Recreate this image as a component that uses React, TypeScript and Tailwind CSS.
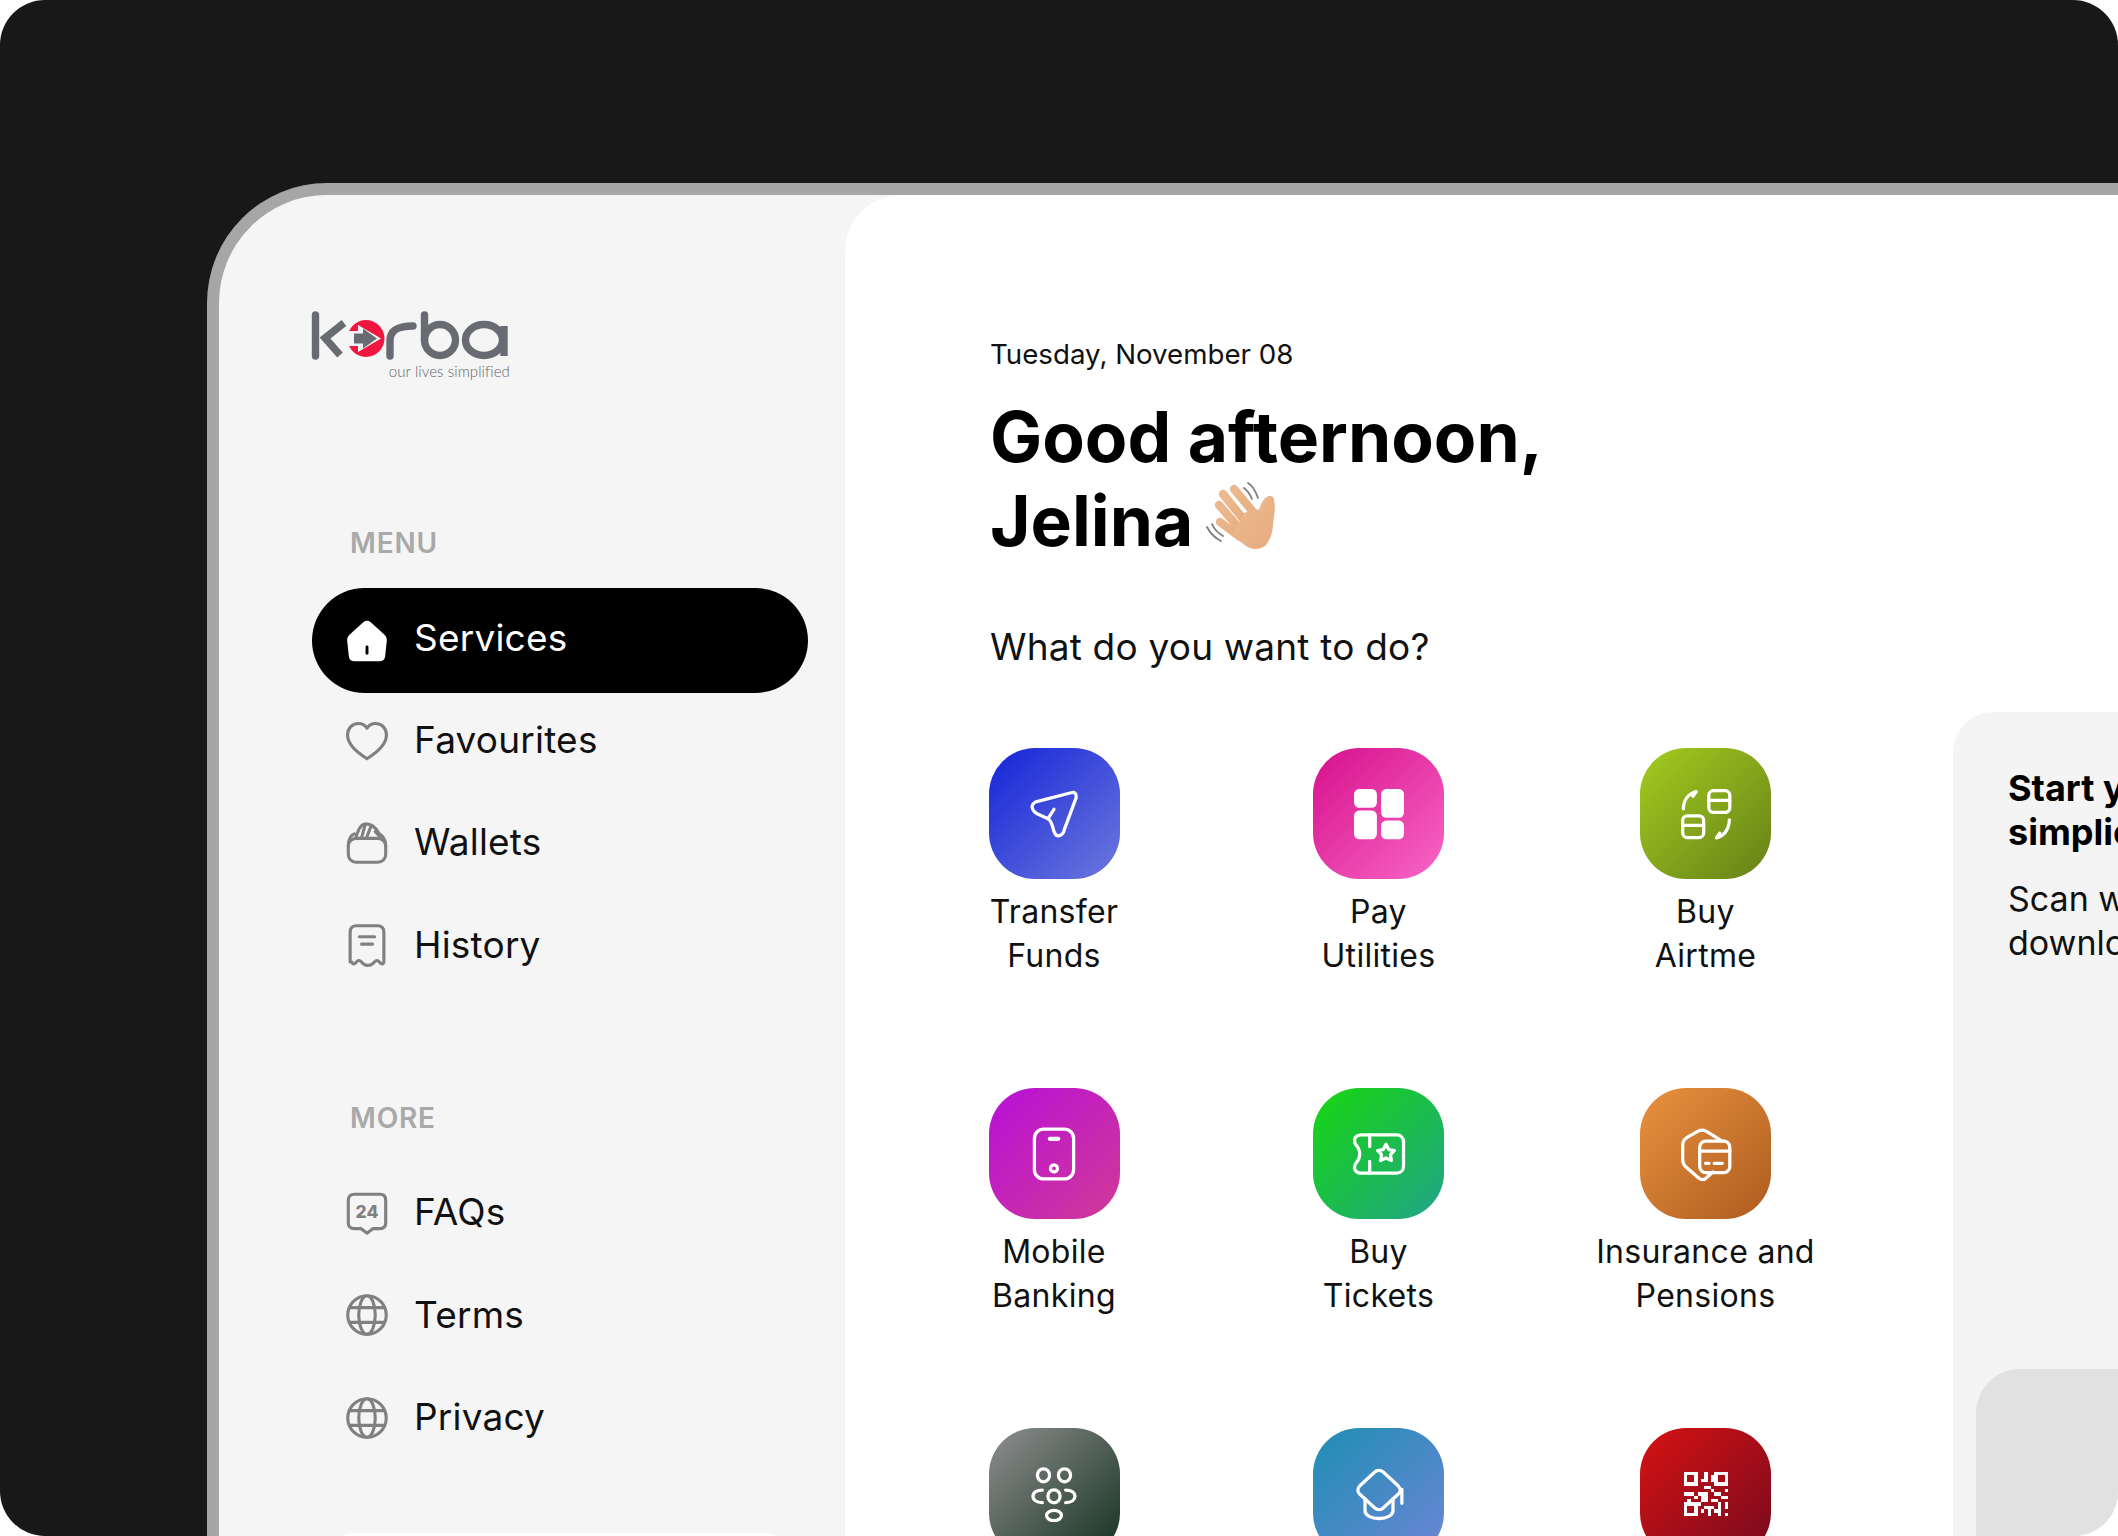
const Stroke = ({ children, size = 44, width = 1.7 }: { children: React.ReactNode; size?: number; width?: number }) => (
  <svg
    width={size}
    height={size}
    viewBox="0 0 24 24"
    fill="none"
    stroke="currentColor"
    strokeWidth={width}
    strokeLinecap="round"
    strokeLinejoin="round"
    className="shrink-0"
  >
    {children}
  </svg>
);

const HomeIcon = () => (
  <svg width={44} height={44} viewBox="0 0 24 24" className="shrink-0">
    <path
      d="M9.800 1.900c1.300-1.200 3.100-1.200 4.400 0l7.200 6.600c1 .9 1.500 2 1.400 3.300l-.9 8.500c-.2 1.800-1.300 2.700-3 2.700H5.100c-1.700 0-2.800-.9-3-2.700l-.9-8.500c-.1-1.300.4-2.400 1.400-3.300z"
      fill="#fff"
    />
    <rect x="11.200" y="14.500" width="1.600" height="5" rx=".8" fill="#000" />
  </svg>
);

const HeartIcon = () => (
  <Stroke>
    <path d="M12 22.200C9 20.300 1.400 15.800 1.400 9.300 1.400 5.400 4.100 3 7.200 3c2 0 3.800 1 4.800 2.600C13 4 14.800 3 16.800 3c3.100 0 5.800 2.400 5.800 6.300 0 6.500-7.600 11-10.600 12.900z" />
  </Stroke>
);

const WalletIcon = () => (
  <Stroke>
    <rect x="1.800" y="9.500" width="20.400" height="13" rx="4.200" />
    <path d="M1.800 13.500c0-3.500 1-5.500 3.200-6.500M22.200 13.500c0-3.500-1.800-5.500-3.700-6.800C16.500 3 13.500 1.500 11 1.600 8.500 1.700 7 5 5.800 9.500M11 1.800 9 9.300M14 3.300l-2.300 6M16.500 5.800l3.500 3.700" />
  </Stroke>
);

const ReceiptIcon = () => (
  <Stroke>
    <path d="M2.800 21.300V5c0-2.300 1.200-3.500 3.500-3.500h11.400c2.300 0 3.500 1.200 3.500 3.500v16.300c0 1-1 1.300-1.700.7l-1-1c-.7-.7-1.600-.7-2.200 0l-1 1c-1.500 1.500-4.100 1.500-5.600 0l-1-1c-.6-.7-1.500-.7-2.200 0l-1 1c-.7.6-1.700.3-1.700-.7z" />
    <path d="M7.800 7.500h8.400M9 11.500h6" />
  </Stroke>
);

const FaqIcon = () => (
  <Stroke>
    <path d="M5 1.800h14c2 0 3.200 1.200 3.200 3.200v12.400c0 2-1.200 3.100-3.200 3.100h-3.700L12 23l-3.300-2.500H5c-2 0-3.200-1.100-3.200-3.100V5c0-2 1.200-3.200 3.200-3.200z" />
    <text x="12" y="14.800" textAnchor="middle" fontSize="9.500" fontWeight="800" fontFamily="Inter, sans-serif" fill="currentColor" stroke="none">
      24
    </text>
  </Stroke>
);

const GlobeIcon = () => (
  <Stroke>
    <circle cx="12" cy="12" r="10.500" />
    <ellipse cx="12" cy="12" rx="4.500" ry="10.500" />
    <path d="M2.800 8h18.400M2.800 16h18.400" />
  </Stroke>
);

const SendIcon = () => (
  <Stroke size={56} width={1.4}>
    <path d="M19.300 2.900c1.500-.5 2.500.4 2.200 2.100L16.500 18.500c-.6 3-3.300 3.800-4.300 1.500-1-2.400-.8-4.700-2.800-6L5 12C2.300 10.500 1.800 8 4.200 6.800z" />
    <path d="M9.400 14l2.600-4" />
  </Stroke>
);

const UtilitiesIcon = () => (
  <svg width={56} height={56} viewBox="0 0 24 24" fill="#fff" className="shrink-0">
    <rect x="1.300" y="1.300" width="9.800" height="8" rx="2.200" />
    <rect x="1.300" y="10.500" width="9.800" height="12.300" rx="2.200" />
    <rect x="12.900" y="1.300" width="9.800" height="12.300" rx="2.200" />
    <rect x="12.900" y="14.800" width="9.800" height="8" rx="2.200" />
  </svg>
);

const AirtimeIcon = () => (
  <Stroke size={56} width={1.4}>
    <rect x="13.200" y="2" width="9" height="9.300" rx="2" />
    <path d="M13.200 6.200h9" />
    <rect x="2" y="12.800" width="9" height="9.300" rx="2" />
    <path d="M2 16.900h9" />
    <path d="M2.300 9.800C2.300 6 4.500 3.300 7.800 2.400l-1.400 2" />
    <path d="M22 14.500c0 3.800-2.200 6.900-5.500 7.700l1.400-2" />
  </Stroke>
);

const MobileIcon = () => (
  <Stroke size={56} width={1.4}>
    <rect x="3.600" y="1.300" width="16.800" height="21.400" rx="4" />
    <path d="M10.200 5.500h3.600" strokeWidth={1.800} />
    <circle cx="12" cy="18.200" r="1.500" />
  </Stroke>
);

const TicketIcon = () => (
  <Stroke size={56} width={1.4}>
    <path d="M4.500 3.800h15c1.800 0 3 1.200 3 3v10.400c0 1.800-1.200 3-3 3h-15c-1.600 0-2.800-.8-3-2.200 0-.5 0-1.500.6-2.100.8-.8 1.600-2 1.600-3.900s-.8-3.100-1.600-3.900c-.6-.6-.6-1.600-.6-2.100.2-1.400 1.400-2.200 3-2.200z" />
    <path d="M8 3.800v5M8 15.200v5" />
    <path d="M15 7.800l1.200 2.300 2.400.4-1.700 1.800.4 2.500-2.300-1.100-2.300 1.100.4-2.500-1.700-1.800 2.400-.4z" />
  </Stroke>
);

const ShieldIcon = () => (
  <Stroke size={56} width={1.4}>
    <path d="M18.800 6.500 15 4 12 2.200c-1.200-.6-2.200-.6-3.400 0L4.100 4.800C2.700 5.600 2 6.800 2 8.300v6.200c0 1.100.5 2.200 1.300 3l5.400 4.700c1.100 1 2.500 1 3.500 0l2.700-2.500" />
    <rect x="9.300" y="6.500" width="12.900" height="13.500" rx="2.600" />
    <path d="M9.300 10.800h12.900M11.800 16h1.500M15.500 16h3.500" />
  </Stroke>
);

const GroupIcon = () => (
  <Stroke size={56} width={1.4}>
    <ellipse cx="7.500" cy="4" rx="2.600" ry="2.800" />
    <ellipse cx="16.500" cy="4" rx="2.600" ry="2.800" />
    <ellipse cx="12" cy="13" rx="2.600" ry="2.800" />
    <ellipse cx="12" cy="21.200" rx="3.200" ry="2.200" />
    <path d="M7 10.300C4.400 10.300 3 11.500 3 13s1.400 2.700 4 2.700M17 10.300c2.600 0 4 1.200 4 2.700s-1.400 2.700-4 2.700" />
  </Stroke>
);

const CapIcon = () => (
  <Stroke size={56} width={1.4}>
    <path d="M10.200 2.600c1-.9 2.600-.9 3.600 0l6.500 6c1 1 1 2.400 0 3.400l-6.500 6c-1 .9-2.600.9-3.600 0l-6.500-6c-1-1-1-2.400 0-3.400z" />
    <path d="M6 14v5c0 2.300 2.800 3.500 6 3.500s6-1.200 6-3.500v-5M21.800 10v6" />
  </Stroke>
);

// qr modules on a 13x13 board, as x,y,w,h
const qrCells = [
  [6, 0, 1, 3], [8, 1, 1, 2], [6, 4, 2, 1], [9, 6, 2, 1], [0, 6, 3, 1], [4, 6, 3, 1],
  [1, 8, 1, 1], [3, 7, 1, 1], [6, 7, 1, 2], [8, 8, 2, 1], [11, 7, 2, 1], [10, 9, 1, 2],
  [12, 9, 1, 2], [6, 10, 3, 1], [7, 11, 1, 2], [9, 11, 2, 1], [12, 12, 1, 1], [5, 6, 1, 3],
  [8, 5, 1, 1], [12, 5, 1, 1], [5, 2, 1, 1], [5, 11, 1, 1], [10, 12, 1, 1], [4, 9, 1, 1],
];

const QrIcon = () => (
  <svg width={44} height={44} viewBox="0 0 13 13" fill="#fff" shapeRendering="crispEdges" className="shrink-0">
    {[[0, 0], [9, 0], [0, 9]].map(([x, y]) => (
      <path key={`${x}-${y}`} fillRule="evenodd" d={`M${x} ${y}h4v4h-4zM${x + 1} ${y + 1}v2h2v-2z`} />
    ))}
    {qrCells.map(([x, y, w, h]) => (
      <rect key={`${x}-${y}`} x={x} y={y} width={w} height={h} />
    ))}
  </svg>
);

const WaveHand = () => (
  <svg width={120} height={100} viewBox="0 0 120 100" className="-my-[8px] -ml-[3px] shrink-0">
    <defs>
      <linearGradient id="skin" x1="0" y1="0" x2="1" y2="1">
        <stop offset="0" stopColor="#edbb90" />
        <stop offset="1" stopColor="#e5ab7e" />
      </linearGradient>
    </defs>
    <path d="M58 12c5 3 8 9 10 15M54 17c4 3 6 6 8 11M17 56c3 6 8 11 14 14M22 53c2 5 6 9 11 12" fill="none" stroke="#7f7f7f" strokeWidth="1.800" strokeLinecap="round" />
    <g fill="none" stroke="url(#skin)" strokeWidth="8.400" strokeLinecap="round">
      <path d="M44 18l20 24M33 23l21 26M29 34l20 23M30 51l20 15" />
      <path d="M80 29c-4 1-6 7-8 13" strokeWidth="8" />
    </g>
    <path d="M54 42l12-4 7 3 3-6 8-6c2 8 0 16-1 24 0 8-3 17-8 22-6 4-13 4-19 0l-14-11 6-10z" fill="url(#skin)" />
  </svg>
);

const KorbaLogo = () => (
  <div className="ml-[92px] flex w-[199px] flex-col items-end">
    <svg width={199} height={52} viewBox="311 310 199 52" fill="none" stroke="#686c72" strokeWidth="7.400" strokeLinecap="round" className="shrink-0">
      <path d="M315.500 315v41" />
      <path d="M344 323l-19 15 15 17" strokeLinecap="butt" />
      <circle cx="366" cy="338.500" r="18.500" fill="#f0163f" stroke="none" />
      <path d="M358 325l23 13.500-23 13.500v-6h-14v-15h14z" fill="#f5f5f5" stroke="none" />
      <path d="M354 333.500h9v-5l14 10-14 10v-5h-9z" fill="#686c72" stroke="none" />
      <path d="M390 356v-15c0-11 8-15 23-15" />
      <path d="M424.500 315v25" />
      <circle cx="440" cy="340" r="15.500" />
      <ellipse cx="484" cy="340" rx="18.500" ry="15.500" />
      <path d="M504 326v30" strokeLinecap="butt" />
    </svg>
    <span className="mt-[1px] font-['Lato',sans-serif] text-[15px] leading-[16px] font-light tracking-[0.1px] text-[#60646a]">
      our lives simplified
    </span>
  </div>
);

const NavItem = ({ icon, label, active }: { icon: React.ReactNode; label: string; active?: boolean }) => (
  <div
    className={
      active
        ? "-mb-[4px] ml-[93px] flex h-[105px] w-[496px] items-center gap-[25px] rounded-full bg-black pl-[33px] text-white"
        : "ml-[93px] flex h-[102.500px] w-[496px] items-center gap-[25px] pl-[33px] text-[#808080]"
    }
  >
    {icon}
    <span className={active ? "pb-[6px] text-[37px] tracking-[0.2px] text-white" : "pb-[2px] text-[37px] tracking-[0.2px] text-[#111111]"}>{label}</span>
  </div>
);

const services = [
  { label: ["Transfer", "Funds"], grad: "from-[#1424d8] to-[#6d79dc]", icon: <SendIcon /> },
  { label: ["Pay", "Utilities"], grad: "from-[#d6108c] to-[#f966c6]", icon: <UtilitiesIcon /> },
  { label: ["Buy", "Airtme"], grad: "from-[#a3cc1f] to-[#668018]", icon: <AirtimeIcon /> },
  { label: ["Mobile", "Banking"], grad: "from-[#b90fd8] to-[#d13a96]", icon: <MobileIcon /> },
  { label: ["Buy", "Tickets"], grad: "from-[#17d60f] to-[#20a488]", icon: <TicketIcon /> },
  { label: ["Insurance and", "Pensions"], grad: "from-[#e9933f] to-[#ad5a1e]", icon: <ShieldIcon /> },
  { grad: "from-[#8f8f8f] to-[#13301f]", icon: <GroupIcon /> },
  { grad: "from-[#1e8eb3] to-[#6d85d6]", icon: <CapIcon /> },
  { grad: "from-[#d61212] to-[#760a1f]", icon: <QrIcon /> },
];

export default function App() {
  return (
    <div className="h-[1536px] w-[2118px] overflow-hidden bg-white font-['Inter',sans-serif]">
      <div className="h-full overflow-hidden rounded-[45px] bg-[#181818] pt-[183px] pl-[207px]">
        <div className="flex h-[1353px] w-[1911px] overflow-hidden rounded-tl-[120px] border-t-[12px] border-l-[12px] border-[#a6a6a6] bg-[#f5f5f5]">
          <aside className="w-[626px] shrink-0 pt-[115px]">
            <KorbaLogo />
            <div className="mt-[147px] ml-[131px] text-[28px] leading-[34px] font-semibold tracking-[0.8px] text-[#a9a9a9]">MENU</div>
            <div className="mt-[28px]">
              <NavItem active icon={<HomeIcon />} label="Services" />
              <NavItem icon={<HeartIcon />} label="Favourites" />
              <NavItem icon={<WalletIcon />} label="Wallets" />
              <NavItem icon={<ReceiptIcon />} label="History" />
            </div>
            <div className="mt-[104px] ml-[131px] text-[28px] leading-[34px] font-semibold tracking-[0.8px] text-[#a9a9a9]">MORE</div>
            <div className="mt-[27px]">
              <NavItem icon={<FaqIcon />} label="FAQs" />
              <NavItem icon={<GlobeIcon />} label="Terms" />
              <NavItem icon={<GlobeIcon />} label="Privacy" />
            </div>
            <div className="mt-[64px] ml-[111px] h-[80px] w-[459px] rounded-[24px] bg-white" />
          </aside>

          <main className="flex min-w-0 flex-1 overflow-hidden rounded-tl-[56px] bg-white">
            <section className="w-[1108px] shrink-0 pt-[140px] pl-[145px]">
              <p className="text-[27.700px] leading-[38px] text-[#111111]">Tuesday, November 08</p>
              <h1 className="mt-[22px] text-[69.500px] leading-[84px] font-bold text-black">
                Good afternoon,
                <span className="flex items-center">
                  Jelina
                  <WaveHand />
                </span>
              </h1>
              <p className="mt-[60px] text-[37px] leading-[48px] tracking-[0.2px] text-[#111111]">What do you want to do?</p>
              <div className="mt-[77px] -ml-[98px] grid grid-cols-[324px_325px_329px] auto-rows-[340px]">
                {services.map((s, i) => (
                  <div key={i} className="flex flex-col items-center">
                    <div className={`flex h-[131px] w-[131px] items-center justify-center rounded-[46px] bg-linear-to-br/srgb text-white ${s.grad}`}>{s.icon}</div>
                    {s.label && (
                      <div className="mt-[11px] text-center text-[32px] leading-[44px] tracking-[0.3px] whitespace-nowrap text-[#111111]">
                        <div>{s.label[0]}</div>
                        <div>{s.label[1]}</div>
                      </div>
                    )}
                  </div>
                ))}
              </div>
            </section>

            <section className="mt-[517px] w-[520px] shrink-0 rounded-tl-[40px] bg-[#f4f4f4] pt-[54px] pl-[55px] whitespace-nowrap">
              <h2 className="text-[36px] leading-[44px] font-bold text-black">
                Start your journey to
                <br />
                simplicity
              </h2>
              <p className="mt-[23px] text-[34px] leading-[44px] text-[#111111]">
                Scan with your phone to
                <br />
                download the app
              </p>
              <div className="mt-[404px] -ml-[32px] h-[300px] w-[500px] rounded-tl-[44px] bg-[#e1e1e1]" />
            </section>
          </main>
        </div>
      </div>
    </div>
  );
}
